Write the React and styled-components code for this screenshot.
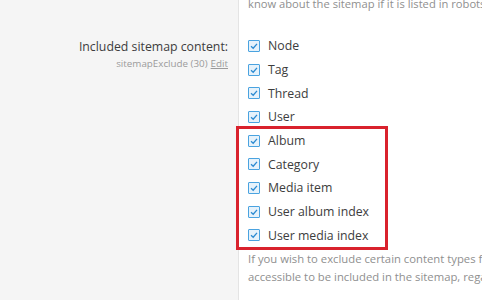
import React from "react";
import styled, { createGlobalStyle } from "styled-components";

const GlobalStyle = createGlobalStyle`
  html, body {
    margin: 0;
    padding: 0;
    background: #ffffff;
    font-family: "Open Sans", "Noto Sans", sans-serif;
  }
`;

const Page = styled.div`
  display: grid;
  grid-template-columns: 239px 1fr;
  width: 482px;
  height: 300px;
  overflow: hidden;
`;

const LabelColumn = styled.div`
  background: #f5f5f5;
  border-right: 1px solid #e4e4e4;
  padding: 38px 10px 0 0;
  text-align: right;
`;

const RowLabel = styled.div`
  font-size: 12.3px;
  line-height: 17px;
  color: #3d3d3d;
`;

const Hint = styled.div`
  margin-top: 2px;
  font-size: 9.8px;
  line-height: 14px;
  color: #9b9b9b;
`;

const HintLink = styled.span`
  text-decoration: underline;
  margin-left: 3px;
`;

const ValueColumn = styled.div`
  padding: 0 0 0 9px;
  margin-top: -5px;
  min-width: 0;
`;

const Explain = styled.div`
  font-size: ${(p) => p.$size || 11.2}px;
  line-height: 18px;
  color: #8f8f8f;
  white-space: nowrap;
`;

const List = styled.div`
  display: flex;
  flex-direction: column;
  margin-top: ${(p) => p.$top || 0}px;
`;

const Highlight = styled.div`
  box-sizing: border-box;
  display: flex;
  flex-direction: column;
  width: 152px;
  margin-left: -12px;
  padding: 0 0 0 9px;
  border: 3px solid #d9222d;
  margin-top: ${(p) => p.$top || 0}px;
`;

const Option = styled.label`
  display: flex;
  align-items: center;
  gap: 8px;
  height: 23.7px;
  font-size: 12.3px;
  color: #3d3d3d;
`;

const Box = styled.span`
  display: inline-flex;
  align-items: center;
  justify-content: center;
  width: 10px;
  height: 10px;
  border: 1px solid #4aa3e0;
  border-radius: 1px;
  background: #e6f2fb;
  flex-shrink: 0;
`;

const Footer = styled(Explain)`
  margin-top: 0px;
`;

const Check = () => (
  <Box>
    <svg width="8" height="8" viewBox="0 0 8 8">
      <path d="M1 4.2 L3.2 6.2 L7 1.8" fill="none" stroke="#2d8bd2" strokeWidth="1.3" />
    </svg>
  </Box>
);

const Item = ({ children }) => (
  <Option>
    <Check />
    {children}
  </Option>
);

export default function App() {
  const plain = ["Node", "Tag", "Thread", "User"];
  const marked = ["Album", "Category", "Media item", "User album index", "User media index"];
  return (
    <Page>
      <GlobalStyle />
      <LabelColumn>
        <RowLabel>Included sitemap content:</RowLabel>
        <Hint>
          sitemapExclude (30)<HintLink>Edit</HintLink>
        </Hint>
      </LabelColumn>
      <ValueColumn>
        <Explain>know about the sitemap if it is listed in robots.txt.</Explain>
        <List $top={21}>
          {plain.map((name) => (
            <Item key={name}>{name}</Item>
          ))}
        </List>
        <Highlight $top={-3}>
          {marked.map((name) => (
            <Item key={name}>{name}</Item>
          ))}
        </Highlight>
        <Footer $size={11.3}>
          If you wish to exclude certain content types from the sitemap, uncheck them here.
          <br />
          accessible to be included in the sitemap, regardless of this setting.
        </Footer>
      </ValueColumn>
    </Page>
  );
}
